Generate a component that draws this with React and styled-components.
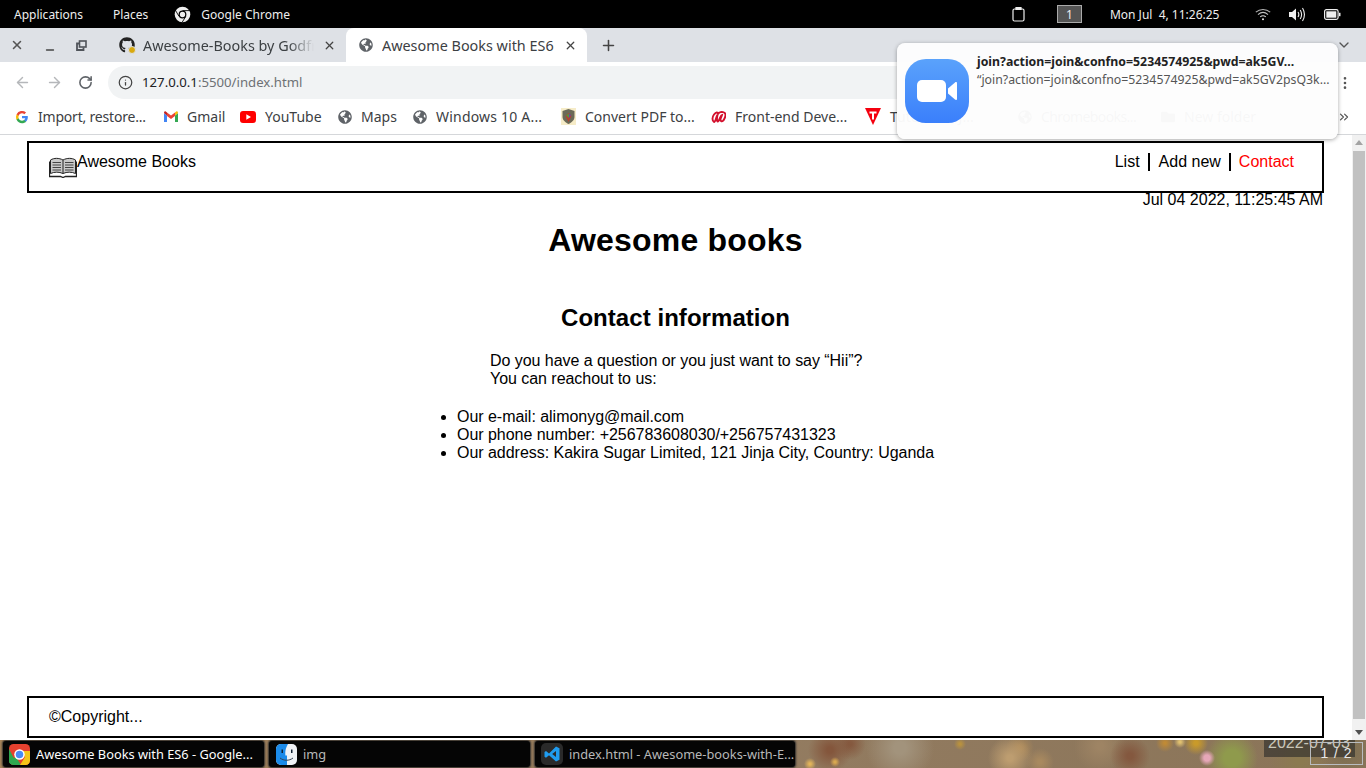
import React from "react";
import styled, { createGlobalStyle } from "styled-components";
import { FaGithub, FaGlobeAmericas, FaFolder } from "react-icons/fa";
import { X, Minus, Plus, ArrowLeft, ArrowRight, RotateCw, Info, ChevronDown, ChevronsRight, MoreVertical } from "lucide-react";

const GlobalStyle = createGlobalStyle`
  html, body { margin: 0; padding: 0; height: 100%; overflow: hidden; }
  body { font-family: "Liberation Sans", Arial, sans-serif; background: #fff; }
`;

const Screen = styled.div`
  position: relative;
  width: 1366px;
  height: 768px;
  display: flex;
  flex-direction: column;
  overflow: hidden;
`;

/* gnome top bar */
const TopBar = styled.div`
  height: 28px;
  flex: none;
  background: #000;
  color: #eee;
  display: flex;
  align-items: center;
  padding: 0 14px;
  font: 12px "Noto Sans", sans-serif;
`;
const BarItem = styled.span`
  display: flex;
  align-items: center;
  margin-left: ${(p) => p.$ml || 0}px;
  white-space: pre;
`;
const Workspace = styled.span`
  width: 25px;
  height: 18px;
  margin-left: 32px;
  box-sizing: border-box;
  background: #555;
  border: 1px solid #aaa;
  display: flex;
  align-items: center;
  justify-content: center;
  font-size: 12px;
`;

/* chrome */
const TabStrip = styled.div`
  height: 34px;
  flex: none;
  background: #dee1e6;
  display: flex;
  align-items: flex-end;
  color: #3c4043;
  font: 14.4px "Noto Sans", sans-serif;
`;
const WindowButtons = styled.div`
  display: flex;
  align-items: center;
  height: 34px;
  width: 110px;
  padding-left: 10px;
  box-sizing: border-box;
  flex: none;
  gap: 20px;
`;
const MinimizeSlot = styled.span`
  display: flex;
  margin-top: 9px;
`;
const Tab = styled.div`
  height: 34px;
  width: ${(p) => p.$w}px;
  box-sizing: border-box;
  flex: none;
  display: flex;
  align-items: center;
  gap: 9px;
  padding: 0 10px 0 ${(p) => (p.$active ? 13 : 9)}px;
  background: ${(p) => (p.$active ? "#fff" : "transparent")};
  border-radius: 8px 8px 0 0;
  white-space: nowrap;
`;
const TabTitle = styled.span`
  flex: 1;
  overflow: hidden;
  ${(p) => (p.$fade ? "mask-image: linear-gradient(90deg, #000 85%, transparent);" : "")}
`;
const TabFavicon = styled.span`
  position: relative;
  display: flex;
  flex: none;
  margin-right: -1px;
`;
const StatusDot = styled.span`
  position: absolute;
  right: -1px;
  bottom: -1px;
  width: 6px;
  height: 6px;
  border-radius: 50%;
  background: #d9a90f;
  border: 1px solid #dee1e6;
`;
const NewTab = styled.div`
  margin-left: 13px;
  height: 34px;
  display: flex;
  align-items: center;
`;
const StripEnd = styled.div`
  margin-left: auto;
  height: 34px;
  display: flex;
  align-items: center;
  padding-right: 14px;
`;

const Toolbar = styled.div`
  height: 37px;
  flex: none;
  background: #fff;
  box-sizing: border-box;
  padding: 4px 0 0 14px;
  display: flex;
  align-items: center;
  gap: 15px;
`;
const Omnibox = styled.div`
  width: 1190px;
  height: 33px;
  background: #f1f3f4;
  border-radius: 17px;
  display: flex;
  align-items: center;
  gap: 9px;
  padding: 0 0 1px 10px;
  box-sizing: border-box;
  font: 13.2px "Noto Sans", sans-serif;
  color: #202124;
`;
const UrlRest = styled.span`
  color: #6d7175;
`;
const MenuSlot = styled.div`
  margin-left: auto;
  padding-right: 13px;
  display: flex;
`;

const Bookmarks = styled.div`
  height: 36px;
  flex: none;
  background: #fff;
  border-bottom: 1px solid #d5d7da;
  box-sizing: border-box;
  display: flex;
  align-items: center;
  padding-left: 15px;
  font: 14px "Noto Sans", sans-serif;
  color: #3c4043;
  white-space: nowrap;
`;
const Bookmark = styled.div`
  display: flex;
  align-items: center;
  gap: 9px;
  width: ${(p) => p.$w}px;
  flex: none;
  letter-spacing: ${(p) => p.$ls || 0}px;
`;
const BookmarkEnd = styled.div`
  margin-left: auto;
  padding-right: 15px;
  display: flex;
`;

/* page */
const PageRow = styled.div`
  flex: 1;
  display: flex;
  min-height: 0;
  position: relative;
  z-index: 1;
`;
const Main = styled.main`
  flex: 1;
  min-width: 0;
  display: flex;
  flex-direction: column;
  padding: 6px 28px 2px 27px;
  color: #000;
  background: #fff;
`;
const Scrollbar = styled.div`
  width: 14px;
  flex: none;
  background: #f1f1f1;
  display: flex;
  flex-direction: column;
  align-items: center;
`;
const ScrollArrow = styled.div`
  width: 0;
  height: 0;
  margin: 5px 0;
  border-left: 4px solid transparent;
  border-right: 4px solid transparent;
  ${(p) => (p.$up ? "border-bottom: 5px solid #a3a3a3;" : "border-top: 5px solid #505050;")}
`;
const ScrollThumb = styled.div`
  flex: 1;
  width: 12px;
  background: #c1c1c1;
  margin: 1px 0 6px;
`;
const Header = styled.header`
  height: 52px;
  box-sizing: border-box;
  border: 2px solid #000;
  display: flex;
  justify-content: space-between;
  padding: 10px 20px 0 20px;
  font-size: 16px;
  line-height: 18px;
`;
const Brand = styled.div`
  display: flex;
  align-items: flex-start;
`;
const BookSlot = styled.span`
  display: flex;
  margin-top: 4px;
`;
const NavList = styled.nav`
  display: flex;
  align-items: flex-start;
`;
const NavLink = styled.span`
  padding: 0 8px 0 ${(p) => (p.$last ? 8 : 9)}px;
  color: ${(p) => (p.$active ? "#f00" : "#000")};
  border-right: ${(p) => (p.$last ? "none" : "2px solid #000")};
`;
const DateLine = styled.div`
  text-align: right;
  font-size: 16px;
  line-height: 18px;
  margin-top: -2px;
  padding-right: 1px;
`;
const Title = styled.h1`
  text-align: center;
  margin: 13px 0 0;
  font-size: 32px;
  line-height: 37px;
  letter-spacing: 0.2px;
`;
const SubTitle = styled.h2`
  text-align: center;
  margin: 45px 0 0;
  font-size: 24px;
  line-height: 28px;
  letter-spacing: 0.05px;
`;
const Intro = styled.p`
  margin: 20px 0 0 463px;
  font-size: 16px;
  line-height: 18px;
  letter-spacing: -0.04px;
`;
const ContactList = styled.ul`
  margin: 20px 0 0;
  padding: 0 0 0 430px;
  font-size: 16px;
  line-height: 18px;
  letter-spacing: -0.03px;
`;
const Footer = styled.footer`
  margin-top: auto;
  height: 42px;
  box-sizing: border-box;
  border: 2px solid #000;
  padding: 10px 20px;
  font-size: 16px;
  line-height: 18px;
`;

/* taskbar on top of the wallpaper */
const wallSpots = [
  [1207, 18, "#e6a7b8", 3, 8],
  [1232, 18, "#8f9a4c", 8, 26],
  [1196, 3, "#c99a2a", 2, 12],
  [1165, 3, "#c08a35", 1, 9],
  [1180, 2, "#e0c070", 1, 6],
  [1130, 16, "#84583f", 3, 20],
  [1010, 18, "#bd9d70", 3, 22],
  [1020, 8, "#ad8a5a", 2, 14],
  [1040, 22, "#a8895f", 2, 14],
  [810, 24, "#e2b45a", 1, 6],
  [835, 22, "#d8a850", 1, 5],
  [830, 10, "#84563c", 3, 22],
  [850, 4, "#85593f", 2, 16],
  [960, 4, "#b8913f", 1, 6],
  [900, 8, "#a2937c", 6, 34],
  [1100, 6, "#9e8464", 3, 26],
  [1300, 20, "#8b7a50", 4, 30],
  [1345, 10, "#7d6f52", 5, 26],
];
const Taskbar = styled.div`
  height: 28px;
  flex: none;
  position: relative;
  overflow: visible;
  display: flex;
  align-items: center;
  gap: 5px;
  padding-left: 3px;
  background: ${wallSpots
      .map(([x, y, c, a, b]) => `radial-gradient(circle at ${x}px ${y}px, ${c} 0 ${a}px, transparent ${b}px)`)
      .join(", ")},
    linear-gradient(90deg, #a9855a, #927b60 60%, #8a7458);
  font: 12.8px "Noto Sans", sans-serif;
`;
const TaskButton = styled.div`
  width: ${(p) => p.$w}px;
  height: 26px;
  box-sizing: border-box;
  flex: none;
  background: #050505;
  border-radius: 3px;
  box-shadow: 0 0 2px 1px #2a2a2a;
  color: ${(p) => (p.$active ? "#fff" : "#b8b8b8")};
  display: flex;
  align-items: center;
  gap: 6px;
  padding-left: ${(p) => p.$pad || 6}px;
  white-space: nowrap;
`;
const WallDate = styled.div`
  position: absolute;
  left: 1264px;
  top: 0;
  width: 91px;
  height: 17px;
  overflow: hidden;
  background: rgba(40, 40, 40, 0.6);
  color: #c9c6b8;
  font: 16px/18px "Liberation Sans", sans-serif;
  padding-left: 4px;
  box-sizing: border-box;
  white-space: nowrap;
`;
const WallDateText = styled.span`
  display: block;
  margin-top: -6px;
`;
const Pager = styled.div`
  position: absolute;
  left: 1310px;
  top: 2px;
  width: 53px;
  height: 23px;
  box-sizing: border-box;
  border: 1px solid #b9bcc0;
  color: #e8e8e8;
  font: 14px/21px "Liberation Sans", sans-serif;
  text-align: center;
  letter-spacing: 1px;
`;

/* desktop notification over the browser */
const Notification = styled.div`
  position: absolute;
  z-index: 2;
  left: 897px;
  top: 43px;
  width: 441px;
  height: 96px;
  box-sizing: border-box;
  background: rgba(253, 253, 253, 0.97);
  border-radius: 8px;
  box-shadow: 0 1px 4px rgba(0, 0, 0, 0.35);
  display: flex;
  padding: 16px 0 0 8px;
  gap: 8px;
`;
const NoteText = styled.div`
  font: 12.3px "Noto Sans", sans-serif;
  color: #555;
  line-height: 17.5px;
  margin-top: -6px;
  white-space: nowrap;
`;
const NoteTitle = styled.div`
  font-weight: 700;
  color: #222;
`;

const Globe = () => <FaGlobeAmericas size={14} color="#5f6368" />;

const RestoreIcon = () => (
  <svg width="11" height="11" viewBox="0 0 11 11" fill="none" stroke="#50545a" strokeWidth="1.6">
    <rect x="3.5" y="1" width="6.500" height="6" />
    <path d="M3 3.500H1V10h6.500V7.500" strokeWidth="1.8" />
  </svg>
);

const ClipboardIcon = () => (
  <svg width="13" height="16" viewBox="0 0 13 16" fill="none" stroke="#eee" strokeWidth="1.2">
    <rect x="1" y="3" width="11" height="12" rx="1.500" />
    <path d="M4 3.500V1.500h5v2z" fill="#eee" />
  </svg>
);

const WifiIcon = () => (
  <svg width="16" height="13" viewBox="0 0 16 13" fill="none" stroke="#eee" strokeWidth="1.100">
    <path d="M.8 4.200C5 .5 11 .5 15.200 4.200" opacity="0.75" />
    <path d="M3 6.600c3-2.600 7-2.600 10 0" opacity="0.8" />
    <path d="M5.200 8.900c1.700-1.400 3.900-1.400 5.600 0" opacity="0.9" />
    <circle cx="8" cy="11.300" r="1" fill="#eee" stroke="none" />
  </svg>
);

const VolumeIcon = () => (
  <svg width="17" height="15" viewBox="0 0 17 15" fill="none" stroke="#eee" strokeWidth="1.100">
    <path d="M0 5h3l4-3.500v12L3 10H0z" fill="#eee" stroke="none" />
    <path d="M9 5c1 1.500 1 3.500 0 5M11.200 3c1.700 2.700 1.700 6.300 0 9M13.500 1c2.400 4 2.400 9 0 13" />
  </svg>
);

const BatteryIcon = () => (
  <svg width="17" height="11" viewBox="0 0 17 11" fill="none" stroke="#eee" strokeWidth="1.200">
    <rect x=".6" y=".6" width="13.500" height="9.800" rx="1.800" />
    <rect x="2.300" y="2.300" width="10" height="6.400" fill="#eee" stroke="none" />
    <rect x="15" y="3.800" width="1.500" height="3.400" fill="#eee" stroke="none" />
  </svg>
);

const ChromeTile = () => (
  <svg width="21" height="21" viewBox="0 0 42 42">
    <defs>
      <clipPath id="tileClip">
        <rect width="42" height="42" rx="9" />
      </clipPath>
    </defs>
    <g clipPath="url(#tileClip)">
      <rect width="42" height="42" fill="#e6412f" />
      <path d="M0 10l16 30H0z" fill="#2fa84f" />
      <path d="M0 42V32l14-6 10 16z" fill="#2fa84f" />
      <path d="M42 14v28H22l10-16-9-12z" fill="#f5c518" />
    </g>
    <circle cx="21" cy="21" r="10.500" fill="#fff" />
    <circle cx="21" cy="21" r="7.500" fill="#4a8af4" />
  </svg>
);

const MonoChrome = () => (
  <svg width="17" height="17" viewBox="0 0 48 48">
    <circle cx="24" cy="24" r="22" fill="#eee" />
    <circle cx="24" cy="24" r="11" fill="#000" />
    <circle cx="24" cy="24" r="7.5" fill="#eee" />
    <path d="M24 13h20M14 29L4 12M33 30L23 46" stroke="#000" strokeWidth="2.5" />
  </svg>
);

const GoogleG = () => (
  <svg width="14" height="14" viewBox="0 0 48 48">
    <path d="M44 24.500c0-1.500-.1-2.900-.4-4.300H24v8.200h11.200a9.600 9.600 0 0 1-4.200 6.300v5.200h6.700C41.600 36.300 44 30.900 44 24.500z" fill="#4285f4" />
    <path d="M24 45c5.600 0 10.300-1.900 13.700-5.100L31 34.700c-1.900 1.300-4.200 2-7 2-5.400 0-10-3.600-11.600-8.500H5.500v5.300A21 21 0 0 0 24 45z" fill="#34a853" />
    <path d="M12.400 28.200a12.600 12.600 0 0 1 0-8.200v-5.300H5.500a21 21 0 0 0 0 18.800z" fill="#fbbc05" />
    <path d="M24 11.300c3 0 5.800 1 7.900 3.100l5.900-5.900A21 21 0 0 0 5.500 14.700l6.900 5.300c1.600-4.900 6.200-8.700 11.600-8.700z" fill="#ea4335" />
  </svg>
);

const GmailIcon = () => (
  <svg width="14" height="12" viewBox="0 0 28 24">
    <path d="M0 4v18h6V9z" fill="#4285f4" />
    <path d="M22 9v13h6V4z" fill="#34a853" />
    <path d="M6 10l8 6 8-6V3l-8 6-8-6z" fill="#ea4335" />
    <path d="M0 4l6 5V3L3.500 1C2 0 0 1.500 0 4z" fill="#c5221f" />
    <path d="M28 4l-6 5V3l2.500-2C26 0 28 1.500 28 4z" fill="#fbbc05" />
  </svg>
);

const YouTubeIcon = () => (
  <svg width="16" height="12" viewBox="0 0 16 12">
    <rect width="16" height="12" rx="3" fill="#f00" />
    <path d="M6.300 3.300L11 6l-4.700 2.700z" fill="#fff" />
  </svg>
);

const ShieldIcon = () => (
  <svg width="15" height="17" viewBox="0 0 15 17">
    <rect width="15" height="17" fill="#f6ecc8" />
    <path d="M1.500 3L7.500 1l6 2v6c0 3-3 5.500-6 7-3-1.500-6-4-6-7z" fill="#6b6a58" />
    <path d="M7.500 5l3 3-3 6-3-6z" fill="#b5432f" />
    <path d="M5 7l3-1 0 4z" fill="#4f9a3c" />
    <path d="M8 6l2 1-2 3z" fill="#6a3fb0" />
  </svg>
);

const FrontEndIcon = () => (
  <svg width="15" height="12" viewBox="0 0 15 12">
    <path d="M3 11C1 10 1 6 3 3.500S7 1 7 3c1-2 4-2.500 6-1.500s1.500 4 .5 6-2 3.500-3.500 2.500.5-4 1-6C9.500 4 9 8 7.500 10S5.500 8 6.500 4C5 5 5 11 3 11z" fill="none" stroke="#d3102d" strokeWidth="1.900" />
  </svg>
);

const TutorialIcon = () => (
  <svg width="16" height="17" viewBox="0 0 16 17">
    <path d="M0 0h16L8 17z" fill="#f4000f" />
    <path d="M4.500 3.500h7v2H9v6H7v-6H4.500z" fill="#fff" />
  </svg>
);

const ZoomLogo = () => (
  <svg width="64" height="64" viewBox="0 0 64 64">
    <defs>
      <linearGradient id="zoomFill" x1="0" y1="0" x2="0" y2="1">
        <stop offset="0" stopColor="#5aa2fb" />
        <stop offset="1" stopColor="#3a7ffb" />
      </linearGradient>
    </defs>
    <rect width="64" height="64" rx="21" fill="url(#zoomFill)" />
    <rect x="12" y="21" width="29" height="22" rx="5" fill="#fff" />
    <path d="M43 29.500l7-6c1-.8 2-.4 2 .8v15.400c0 1.200-1 1.600-2 .8l-7-6z" fill="#fff" />
  </svg>
);

const FinderIcon = () => (
  <svg width="21" height="21" viewBox="0 0 21 21">
    <rect width="21" height="21" rx="5" fill="#f0f3f6" />
    <path d="M5 0h7c-2.500 4-3 8-2.600 11.500H11V21H5a5 5 0 0 1-5-5V5a5 5 0 0 1 5-5z" fill="#1b8bea" />
    <rect x="5.500" y="5.500" width="1.500" height="3.500" fill="#123" />
    <rect x="15" y="5.500" width="1.500" height="3.500" fill="#123" />
    <path d="M4 14c4 3 9 3 13 0" fill="none" stroke="#345" strokeWidth="1" />
  </svg>
);

const VsCodeIcon = () => (
  <svg width="22" height="22" viewBox="0 0 22 22">
    <rect width="22" height="22" rx="5" fill="#2a2a2a" />
    <path d="M15 3.500l3.500 1.700v11.600L15 18.500l-7-6.300-3 2.500-1.500-1V9l1.500-1 3 2.500zM15 8l-3.800 3 3.800 3z" fill="#1f9cf0" />
  </svg>
);

const BookIcon = () => (
  <svg width="28" height="21" viewBox="0 0 28 21" fill="none" stroke="#222" strokeWidth="1">
    <path d="M1.500 3C5 .8 10 .8 14 3c4-2.200 9-2.200 12.500 0v13.500c-4-1.800-8.500-1.800-12.500 0-4-1.800-8.500-1.800-12.500 0z" fill="#c9c9c9" />
    <path d="M14 3v13.500" />
    <path d="M3.500 5.500h8.500M3.500 8h8.500M3.500 10.500h8.500M3.500 13h8.500M16 5.500h8.500M16 8h8.500M16 10.500h8.500M16 13h8.500" stroke="#444" />
    <path d="M.5 4.500v15h11l2.500 1 2.500-1h11v-15" strokeWidth="1.300" />
  </svg>
);

const bookmarks = [
  { icon: <GoogleG />, label: "Import, restore...", w: 149, ls: -0.2 },
  { icon: <GmailIcon />, label: "Gmail", w: 76 },
  { icon: <YouTubeIcon />, label: "YouTube", w: 98 },
  { icon: <Globe />, label: "Maps", w: 75 },
  { icon: <Globe />, label: "Windows 10 A...", w: 148, ls: 0.2 },
  { icon: <ShieldIcon />, label: "Convert PDF to...", w: 150 },
  { icon: <FrontEndIcon />, label: "Front-end Deve...", w: 154 },
  { icon: <TutorialIcon />, label: "Tutorials - J...", w: 153 },
  { icon: <Globe />, label: "Chromebooks...", w: 143, ls: -0.6 },
  { icon: <FaFolder size={14} color="#5f6368" />, label: "New folder", w: 100 },
];

export default function App() {
  return (
    <Screen>
      <GlobalStyle />
      <TopBar>
        <BarItem>Applications</BarItem>
        <BarItem $ml={30}>Places</BarItem>
        <BarItem $ml={26}>
          <MonoChrome />
        </BarItem>
        <BarItem $ml={10}>Google Chrome</BarItem>
        <BarItem $ml={722}>
          <ClipboardIcon />
        </BarItem>
        <Workspace>1</Workspace>
        <BarItem $ml={28}>Mon Jul  4, 11:26:25</BarItem>
        <BarItem $ml={36}>
          <WifiIcon />
        </BarItem>
        <BarItem $ml={18}>
          <VolumeIcon />
        </BarItem>
        <BarItem $ml={18}>
          <BatteryIcon />
        </BarItem>
      </TopBar>

      <TabStrip>
        <WindowButtons>
          <X size={14} strokeWidth={2.6} color="#555" />
          <MinimizeSlot>
            <Minus size={12} strokeWidth={2.6} color="#444" />
          </MinimizeSlot>
          <RestoreIcon />
        </WindowButtons>
        <Tab $w={236}>
          <TabFavicon>
            <FaGithub size={16} color="#222" />
            <StatusDot />
          </TabFavicon>
          <TabTitle $fade>Awesome-Books by Godfr</TabTitle>
          <X size={13} strokeWidth={2.4} color="#444" />
        </Tab>
        <Tab $w={241} $active>
          <Globe />
          <TabTitle>Awesome Books with ES6</TabTitle>
          <X size={13} strokeWidth={2.4} color="#444" />
        </Tab>
        <NewTab>
          <Plus size={17} strokeWidth={2.2} color="#444" />
        </NewTab>
        <StripEnd>
          <ChevronDown size={16} color="#555" />
        </StripEnd>
      </TabStrip>

      <Toolbar>
        <ArrowLeft size={17} color="#b5b7ba" />
        <ArrowRight size={17} color="#b5b7ba" />
        <RotateCw size={15} strokeWidth={2.5} color="#5f6368" />
        <Omnibox>
          <Info size={15} color="#444" />
          <span>
            127.0.0.1<UrlRest>:5500/index.html</UrlRest>
          </span>
        </Omnibox>
        <MenuSlot>
          <MoreVertical size={16} color="#555" />
        </MenuSlot>
      </Toolbar>

      <Bookmarks>
        {bookmarks.map((b) => (
          <Bookmark key={b.label} $w={b.w} $ls={b.ls}>
            {b.icon}
            <span>{b.label}</span>
          </Bookmark>
        ))}
        <BookmarkEnd>
          <ChevronsRight size={14} color="#555" />
        </BookmarkEnd>
      </Bookmarks>

      <PageRow>
        <Main>
          <Header>
            <Brand>
              <BookSlot>
                <BookIcon />
              </BookSlot>
              <span>Awesome Books</span>
            </Brand>
            <NavList>
              <NavLink>List</NavLink>
              <NavLink>Add new</NavLink>
              <NavLink $active $last>
                Contact
              </NavLink>
            </NavList>
          </Header>
          <DateLine>Jul 04 2022, 11:25:45 AM</DateLine>
          <Title>Awesome books</Title>
          <SubTitle>Contact information</SubTitle>
          <Intro>
            Do you have a question or you just want to say “Hii”?
            <br />
            You can reachout to us:
          </Intro>
          <ContactList>
            <li>Our e-mail: alimonyg@mail.com</li>
            <li>Our phone number: +256783608030/+256757431323</li>
            <li>Our address: Kakira Sugar Limited, 121 Jinja City, Country: Uganda</li>
          </ContactList>
          <Footer>©Copyright...</Footer>
        </Main>
        <Scrollbar>
          <ScrollArrow $up />
          <ScrollThumb />
          <ScrollArrow />
        </Scrollbar>
      </PageRow>

      <Taskbar>
        <TaskButton $w={261} $active>
          <ChromeTile />
          Awesome Books with ES6 - Google...
        </TaskButton>
        <TaskButton $w={261} $pad={7}>
          <FinderIcon />
          img
        </TaskButton>
        <TaskButton $w={260}>
          <VsCodeIcon />
          index.html - Awesome-books-with-E...
        </TaskButton>
        <WallDate>
          <WallDateText>2022-07-03</WallDateText>
        </WallDate>
        <Pager>1 / 2</Pager>
      </Taskbar>

      <Notification>
        <ZoomLogo />
        <NoteText>
          <NoteTitle>join?action=join&amp;confno=5234574925&amp;pwd=ak5GV...</NoteTitle>
          <div>“join?action=join&amp;confno=5234574925&amp;pwd=ak5GV2psQ3k...</div>
        </NoteText>
      </Notification>
    </Screen>
  );
}
